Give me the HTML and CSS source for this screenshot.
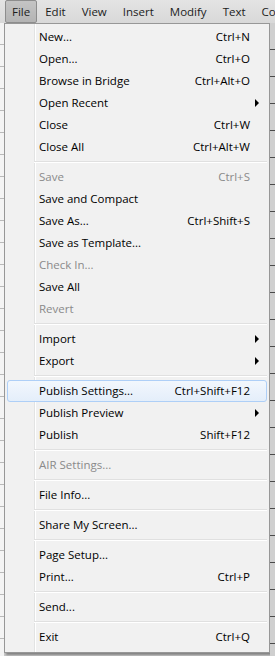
FILE: index.html
```html
<!DOCTYPE html>
<html lang="en">
<head>
  <meta charset="UTF-8">
  <title>File menu</title>
  <link rel="stylesheet" href="styles.css">
</head>
<body>
  <!-- Top menu bar -->
  <div class="menubar">
    <span class="menubar-item active">File</span>
    <span class="menubar-item">Edit</span>
    <span class="menubar-item">View</span>
    <span class="menubar-item">Insert</span>
    <span class="menubar-item">Modify</span>
    <span class="menubar-item">Text</span>
    <span class="menubar-item">Co</span>
  </div>

  <div class="workspace">
    <div class="side-left"></div>

    <!-- File dropdown -->
    <div class="menu">
      <div class="item"><span class="label">New...</span><span class="key">Ctrl+N</span></div>
      <div class="item"><span class="label">Open...</span><span class="key">Ctrl+O</span></div>
      <div class="item"><span class="label">Browse in Bridge</span><span class="key">Ctrl+Alt+O</span></div>
      <div class="item sub"><span class="label">Open Recent</span><span class="key"></span></div>
      <div class="item"><span class="label">Close</span><span class="key">Ctrl+W</span></div>
      <div class="item"><span class="label">Close All</span><span class="key">Ctrl+Alt+W</span></div>
      <div class="sep"></div>
      <div class="item disabled"><span class="label">Save</span><span class="key">Ctrl+S</span></div>
      <div class="item"><span class="label">Save and Compact</span><span class="key"></span></div>
      <div class="item"><span class="label">Save As...</span><span class="key">Ctrl+Shift+S</span></div>
      <div class="item"><span class="label">Save as Template...</span><span class="key"></span></div>
      <div class="item disabled"><span class="label">Check In...</span><span class="key"></span></div>
      <div class="item"><span class="label">Save All</span><span class="key"></span></div>
      <div class="item disabled"><span class="label">Revert</span><span class="key"></span></div>
      <div class="sep"></div>
      <div class="item sub"><span class="label">Import</span><span class="key"></span></div>
      <div class="item sub"><span class="label">Export</span><span class="key"></span></div>
      <div class="sep"></div>
      <div class="item hover"><span class="label">Publish Settings...</span><span class="key">Ctrl+Shift+F12</span></div>
      <div class="item sub"><span class="label">Publish Preview</span><span class="key"></span></div>
      <div class="item"><span class="label">Publish</span><span class="key">Shift+F12</span></div>
      <div class="sep"></div>
      <div class="item disabled"><span class="label">AIR Settings...</span><span class="key"></span></div>
      <div class="sep"></div>
      <div class="item"><span class="label">File Info...</span><span class="key"></span></div>
      <div class="sep"></div>
      <div class="item"><span class="label">Share My Screen...</span><span class="key"></span></div>
      <div class="sep"></div>
      <div class="item"><span class="label">Page Setup...</span><span class="key"></span></div>
      <div class="item"><span class="label">Print...</span><span class="key">Ctrl+P</span></div>
      <div class="sep"></div>
      <div class="item"><span class="label">Send...</span><span class="key"></span></div>
      <div class="sep"></div>
      <div class="item"><span class="label">Exit</span><span class="key">Ctrl+Q</span></div>
    </div>

    <div class="side-right"></div>
  </div>
</body>
</html>
```

FILE: styles.css
```css
body {
  margin: 0;
  width: 275px;
  height: 656px;
  overflow: hidden;
  background-color: #c9c9c9;
  font-family: 'Open Sans', 'Noto Sans', sans-serif;
  font-size: 11.5px;
  color: #000;
}

/* Menu bar */
.menubar {
  display: flex;
  height: 23px;
  align-items: center;
  padding-left: 5px;
  background: linear-gradient(#e4e4e4, #d8d8d8);
  box-sizing: border-box;
  overflow: hidden;
}

.menubar-item {
  padding: 0 6px;
  margin-right: 2px;
  line-height: 21px;
  color: #1c1c1c;
  white-space: nowrap;
  border: 1px solid transparent;
}

.menubar-item.active {
  margin-right: 1px;
  background: linear-gradient(#c4c4c4, #b4b4b4);
  border-color: #8d8d8d;
  border-radius: 2px;
}

/* Area under the bar */
.workspace {
  display: flex;
  height: 633px;
}

.side-left {
  width: 4px;
  background: repeating-linear-gradient(#f4f4f4 0, #f4f4f4 21px, #b9b9b9 21px, #b9b9b9 22px);
}

.side-right {
  flex: 1;
  background: repeating-linear-gradient(#cfcfcf 0, #cfcfcf 26px, #4a4a4a 26px, #4a4a4a 27px);
}

/* Dropdown */
.menu {
  width: 260px;
  height: 624px;
  padding: 2px;
  border: 1px solid #979797;
  background: linear-gradient(to right, #f1f1f1 29px, #e2e3e3 29px, #e2e3e3 30px, #fff 30px, #fff 31px, #f1f1f1 31px);
  box-shadow: 2px 2px 2px rgba(0, 0, 0, 0.35);
}

.item {
  display: flex;
  align-items: center;
  height: 22px;
  padding: 0 16px 1px 31px;
  position: relative;
  border: 1px solid transparent;
  box-sizing: border-box;
  border-radius: 3px;
}

.item .label {
  flex: 1;
  white-space: nowrap;
}

.item .key {
  white-space: nowrap;
}

.item.disabled {
  color: #8a8a8a;
}

.item.hover {
  border-color: #aecff7;
  background: linear-gradient(#f2f7fd, #e4eefa);
}

/* submenu arrow */
.item.sub::after {
  content: "";
  position: absolute;
  right: 7px;
  top: 6px;
  border-left: 4px solid #000;
  border-top: 4px solid transparent;
  border-bottom: 4px solid transparent;
}

.sep {
  height: 8px;
  margin-left: 27px;
  background: linear-gradient(transparent 3px, #e0e0e0 3px, #e0e0e0 4px, #fff 4px, #fff 5px, transparent 5px);
}
```
